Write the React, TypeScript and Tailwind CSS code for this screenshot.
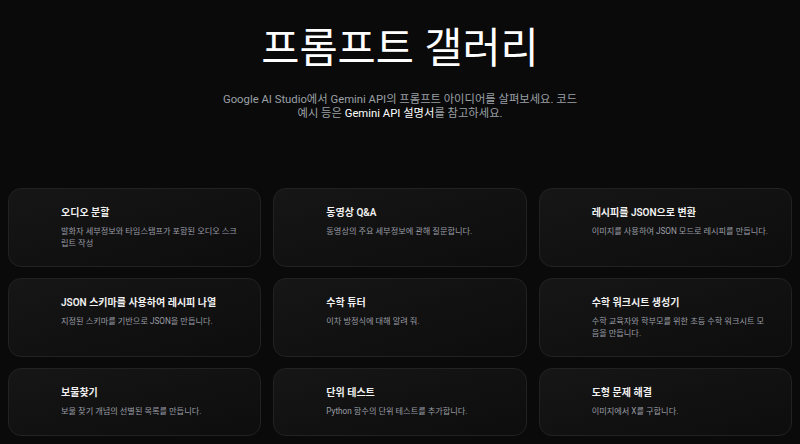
type Prompt = {
  title: string;
  description: string;
};

const prompts: Prompt[] = [
  { title: '오디오 분할', description: '발화자 세부정보와 타임스탬프가 포함된 오디오 스크립트 작성' },
  { title: '동영상 Q&A', description: '동영상의 주요 세부정보에 관해 질문합니다.' },
  { title: '레시피를 JSON으로 변환', description: '이미지를 사용하여 JSON 모드로 레시피를 만듭니다.' },
  { title: 'JSON 스키마를 사용하여 레시피 나열', description: '지정된 스키마를 기반으로 JSON을 만듭니다.' },
  { title: '수학 튜터', description: '이차 방정식에 대해 알려 줘.' },
  { title: '수학 워크시트 생성기', description: '수학 교육자와 학부모를 위한 초등 수학 워크시트 모음을 만듭니다.' },
  { title: '보물찾기', description: '보물 찾기 개념의 선별된 목록를 만듭니다.' },
  { title: '단위 테스트', description: 'Python 함수의 단위 테스트를 추가합니다.' },
  { title: '도형 문제 해결', description: '이미지에서 X를 구합니다.' },
];

function PromptCard({ prompt }: { prompt: Prompt }) {
  return (
    <div className="rounded-[13px] border border-[#222222] bg-gradient-to-br from-[#161616] to-[#0d0d0d] pl-[52px] pr-[21px] pt-[17px] pb-[17px]">
      <h3 className="text-[10px] leading-[14px] font-semibold text-[#f1f1f1]">{prompt.title}</h3>
      <p className="mt-[6px] text-[8.2px] leading-[11.5px] text-[#9a9da5]">{prompt.description}</p>
    </div>
  );
}

export default function App() {
  return (
    <div
      className="min-h-[444px] w-full bg-[#0a0a0a] text-white"
      style={{ fontFamily: "Roboto, 'Noto Sans CJK KR', sans-serif" }}
    >
      {/* Header */}
      <header className="flex flex-col items-center pt-[25px] text-center">
        <h1 className="text-[41.5px] leading-[48px] font-normal text-white">프롬프트 갤러리</h1>
        <p className="mt-[20px] max-w-[364px] text-[11.3px] leading-[14px] text-[#9aa0a6]">
          Google AI Studio에서 Gemini API의 프롬프트 아이디어를 살펴보세요. 코드 예시 등은{' '}
          <span className="text-white">Gemini API 설명서</span>를 참고하세요.
        </p>
      </header>

      {/* Prompt grid */}
      <section className="mt-[67px] grid grid-cols-3 gap-x-[12px] gap-y-[11px] px-[8px]">
        {prompts.map((prompt) => (
          <PromptCard key={prompt.title} prompt={prompt} />
        ))}
      </section>
    </div>
  );
}
